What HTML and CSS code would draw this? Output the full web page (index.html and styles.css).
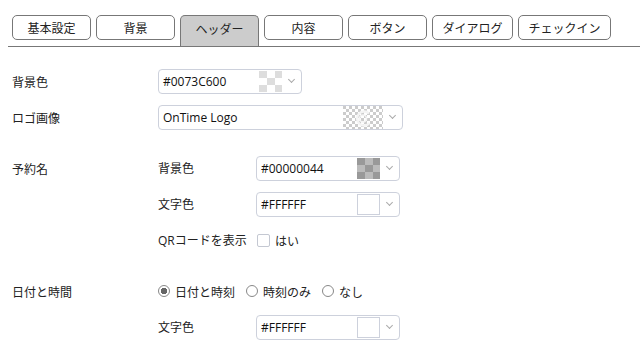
FILE: index.html
```html
<!DOCTYPE html>
<html lang="ja">
<head>
    <meta charset="UTF-8">
    <meta name="viewport" content="width=device-width, initial-scale=1.0">
    <title>ヘッダー設定</title>
    <link rel="stylesheet" href="styles.css">
</head>
<body>
    <nav class="tabs">
        <button class="tab">基本設定</button>
        <button class="tab">背景</button>
        <button class="tab active">ヘッダー</button>
        <button class="tab">内容</button>
        <button class="tab">ボタン</button>
        <button class="tab mid">ダイアログ</button>
        <button class="tab wide">チェックイン</button>
    </nav>

    <div class="form">
        <!-- header colours -->
        <div class="section">
            <div class="row">
                <div class="label">背景色</div>
                <div class="picker">
                    <span class="value">#0073C600</span>
                    <span class="swatch check-light"></span>
                    <span class="chev"></span>
                </div>
            </div>
            <div class="row">
                <div class="label">ロゴ画像</div>
                <div class="picker logo">
                    <span class="value">OnTime Logo</span>
                    <span class="thumb">
                        <svg width="40" height="25" viewBox="0 0 40 25">
                            <path d="M26 7.5 A7 7 0 1 0 26.5 17" fill="none" stroke="#f4f4f4" stroke-width="2.4"/>
                            <circle cx="20" cy="12.5" r="3.5" fill="none" stroke="#f4f4f4" stroke-width="1.6"/>
                        </svg>
                    </span>
                    <span class="chev"></span>
                </div>
            </div>
        </div>

        <!-- reservation name -->
        <div class="section">
            <div class="row">
                <div class="label">予約名</div>
                <div class="sublabel">背景色</div>
                <div class="picker">
                    <span class="value">#00000044</span>
                    <span class="swatch check-dark"></span>
                    <span class="chev"></span>
                </div>
            </div>
            <div class="row">
                <div class="label"></div>
                <div class="sublabel">文字色</div>
                <div class="picker">
                    <span class="value">#FFFFFF</span>
                    <span class="swatch white"></span>
                    <span class="chev"></span>
                </div>
            </div>
            <div class="row">
                <div class="label"></div>
                <div class="sublabel">QRコードを表示</div>
                <label class="option"><span class="box"></span>はい</label>
            </div>
        </div>

        <!-- date and time -->
        <div class="section">
            <div class="row">
                <div class="label">日付と時間</div>
                <label class="option"><span class="radio on"></span>日付と時刻</label>
                <label class="option"><span class="radio"></span>時刻のみ</label>
                <label class="option"><span class="radio"></span>なし</label>
            </div>
            <div class="row">
                <div class="label"></div>
                <div class="sublabel">文字色</div>
                <div class="picker">
                    <span class="value">#FFFFFF</span>
                    <span class="swatch white"></span>
                    <span class="chev"></span>
                </div>
            </div>
        </div>
    </div>
</body>
</html>
```

FILE: styles.css
```css
body {
    margin: 0;
    font-family: 'Open Sans', 'Noto Sans CJK JP', sans-serif;
    font-size: 12px;
    color: #222;
    background: #fff;
}

.tabs {
    display: flex;
    align-items: flex-start;
    gap: 5px;
    height: 31px;
    margin: 15px 0 0 8px;
    padding-left: 4px;
    border-bottom: 1px solid #777;
}

.tab {
    width: 79px;
    height: 25px;
    padding: 0;
    font-family: 'Noto Sans CJK JP', sans-serif;
    font-size: 12px;
    color: #222;
    background: #fff;
    border: 1px solid #777;
    border-radius: 5px;
}

.tab.mid {
    width: 81px;
}

.tab.wide {
    width: 93px;
}

.tab.active {
    height: 31px;
    background: #ccc;
    border-bottom: none;
    border-radius: 5px 5px 0 0;
    padding-bottom: 6px;
}

.form {
    padding: 16px 0 0 12px;
}

.section {
    margin-bottom: 15px;
}

.row {
    display: flex;
    align-items: center;
    height: 36px;
}

.label {
    width: 146px;
    flex: none;
    font-family: 'Noto Sans CJK JP', sans-serif;
}

.sublabel {
    width: 98px;
    flex: none;
}

.picker {
    display: flex;
    align-items: center;
    box-sizing: border-box;
    width: 144px;
    height: 25px;
    border: 1px solid #cdd1dc;
    border-radius: 4px;
    padding-left: 4px;
}

.picker.logo {
    width: 245px;
}

.value {
    flex: 1;
    font-size: 12px;
    color: #111;
}

.swatch {
    width: 23px;
    height: 21px;
}

.check-light {
    background: repeating-conic-gradient(#fff 0 25%, #ddd 0 50%) 0 0 / 16px 14px;
}

.check-dark {
    background: repeating-conic-gradient(#bbb 0 25%, #999 0 50%) 0 0 / 16px 14px;
}

.white {
    box-sizing: border-box;
    background: #fff;
    border: 1px solid #cdd1dc;
}

.thumb {
    width: 40px;
    height: 23px;
    background: repeating-conic-gradient(#fff 0 25%, #ccc 0 50%) 0 0 / 6px 6px;
}

.thumb svg {
    display: block;
}

.chev {
    width: 19px;
    height: 23px;
    position: relative;
}

.chev::after {
    content: '';
    position: absolute;
    left: 7px;
    top: 7px;
    width: 4px;
    height: 4px;
    border-right: 1px solid #aaa;
    border-bottom: 1px solid #aaa;
    transform: rotate(45deg);
}

.option {
    display: flex;
    align-items: center;
    margin-right: 11px;
    font-family: 'Noto Sans CJK JP', sans-serif;
}

.box {
    width: 11px;
    height: 11px;
    margin: 0 5px 0 1px;
    border: 1px solid #c4c8d2;
    border-radius: 2px;
}

.radio {
    box-sizing: border-box;
    width: 12px;
    height: 12px;
    margin-right: 5px;
    border: 1px solid #888;
    border-radius: 50%;
}

.radio.on {
    background: radial-gradient(circle, #666 0 3px, #fff 3.5px);
}
```
